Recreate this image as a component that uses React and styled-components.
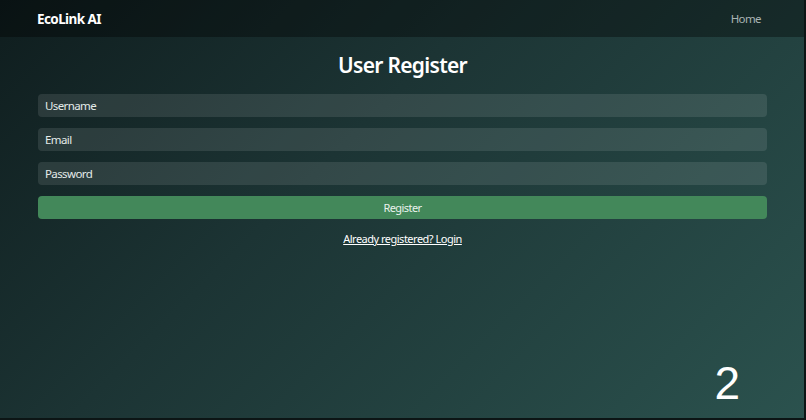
import React, { useState } from 'react'
import styled, { createGlobalStyle } from 'styled-components'

const GlobalStyle = createGlobalStyle`
	* {
		box-sizing: border-box;
	}
	body {
		margin: 0;
		font-family: 'Noto Sans', 'Open Sans', sans-serif;
	}
`

const Page = styled.div`
	position: relative;
	min-height: 100vh;
	background: linear-gradient(135deg, #0f1d1e 0%, #1c3434 40%, #2b524e 100%);
	border-right: 2px solid #0c1515;
	border-bottom: 2px solid #0c1515;
	color: #ffffff;
`

const NavBar = styled.nav`
	height: 37px;
	display: flex;
	align-items: center;
	justify-content: space-between;
	padding: 0 43px 0 37px;
	background: rgba(0, 0, 0, 0.35);
`

const Brand = styled.span`
	font-weight: 700;
	font-size: 13.5px;
	letter-spacing: -0.6px;
`

const NavLink = styled.a`
	font-size: 11.5px;
	letter-spacing: -0.6px;
	color: #a9b4b4;
	text-decoration: none;
	cursor: pointer;
`

const Main = styled.main`
	padding: 13px 37px 0 38px;
`

const Title = styled.h1`
	margin: 0 0 14px;
	text-align: center;
	font-size: 21px;
	font-weight: 600;
	letter-spacing: -0.7px;
	line-height: 30px;
`

const Form = styled.form`
	display: flex;
	flex-direction: column;
	gap: 11px;
`

const Input = styled.input`
	height: 23px;
	border: none;
	border-radius: 4px;
	padding: 0 7px;
	background: rgba(255, 255, 255, 0.1);
	color: #ffffff;
	font-family: inherit;
	font-size: 11.5px;
	letter-spacing: -0.6px;
	outline: none;

	&::placeholder {
		color: #e4ebea;
	}
`

const Button = styled.button`
	height: 23px;
	border: none;
	border-radius: 4px;
	background: #43885a;
	color: #e9f2ec;
	font-family: inherit;
	font-size: 11px;
	letter-spacing: -0.55px;
	cursor: pointer;
`

const LoginLink = styled.a`
	display: block;
	margin-top: 12px;
	text-align: center;
	font-size: 11px;
	letter-spacing: -0.5px;
	color: #ffffff;
	text-decoration: underline;
	cursor: pointer;
`

const PageNumber = styled.span`
	position: absolute;
	right: 64px;
	bottom: 8px;
	font-family: 'Liberation Sans', Arial, sans-serif;
	font-size: 46px;
	color: #ffffff;
`

const App = () => {
	const [form, setForm] = useState({ username: '', email: '', password: '' })

	const handleChange = e => setForm({ ...form, [e.target.name]: e.target.value })

	return (
		<>
			<GlobalStyle />
			<Page>
				<NavBar>
					<Brand>EcoLink AI</Brand>
					<NavLink>Home</NavLink>
				</NavBar>
				<Main>
					<Title>User Register</Title>
					<Form onSubmit={e => e.preventDefault()}>
						<Input name='username' placeholder='Username' value={form.username} onChange={handleChange} />
						<Input name='email' placeholder='Email' value={form.email} onChange={handleChange} />
						<Input name='password' type='password' placeholder='Password' value={form.password} onChange={handleChange} />
						<Button type='submit'>Register</Button>
					</Form>
					<LoginLink>Already registered? Login</LoginLink>
				</Main>
				<PageNumber>2</PageNumber>
			</Page>
		</>
	)
}

export default App
